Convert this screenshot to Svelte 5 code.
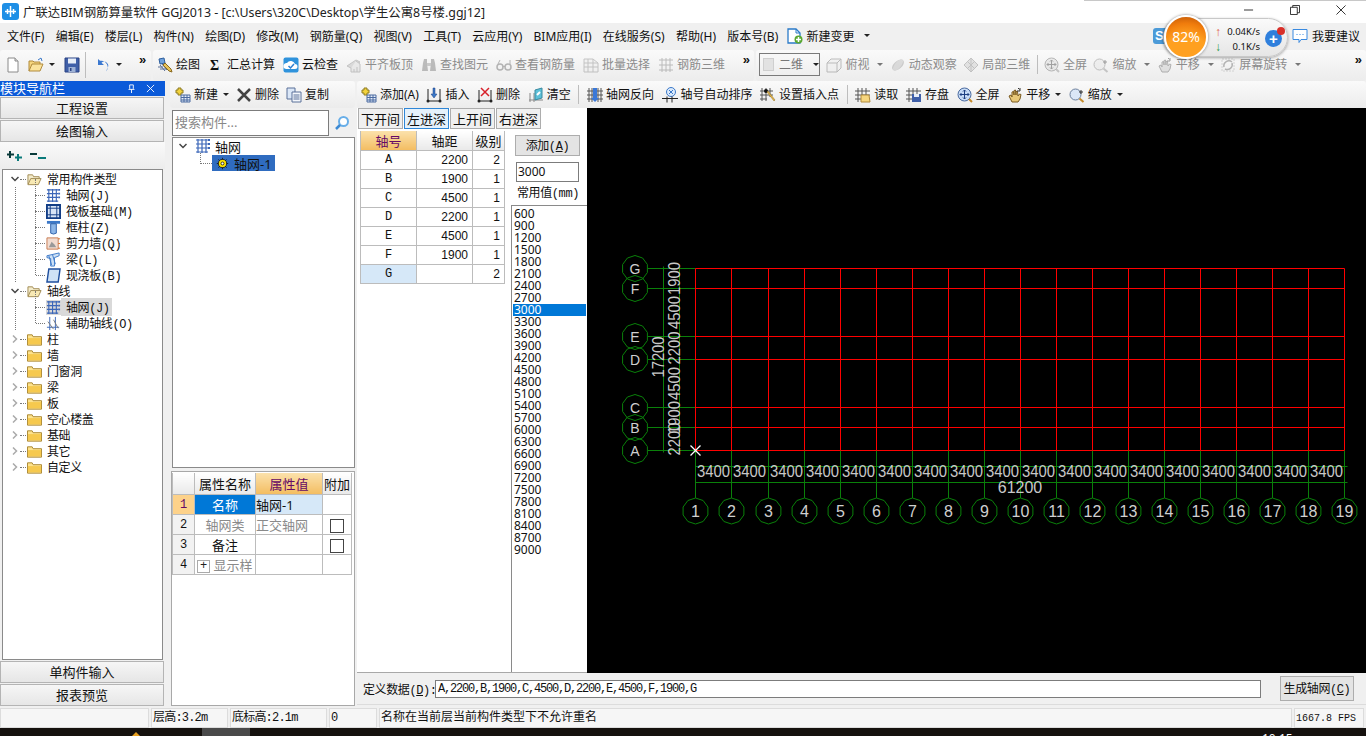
<script>
  const menus = ['文件(F)', '编辑(E)', '楼层(L)', '构件(N)', '绘图(D)', '修改(M)', '钢筋量(Q)', '视图(V)', '工具(T)', '云应用(Y)', 'BIM应用(I)', '在线服务(S)', '帮助(H)', '版本号(B)'];

  const drawTools = [
    { i: 'draw', t: '绘图' },
    { i: 'sigma', t: '汇总计算' },
    { i: 'cloud', t: '云检查' },
    { i: 'flush', t: '平齐板顶', off: true },
    { i: 'binoc', t: '查找图元', off: true },
    { i: 'glass', t: '查看钢筋量', off: true },
    { i: 'batch', t: '批量选择', off: true },
    { i: 'rebar', t: '钢筋三维', off: true }
  ];
  const viewTools = [
    { i: 'cube', t: '俯视', off: true, arrow: true },
    { i: 'orbit', t: '动态观察', off: true },
    { i: 'local', t: '局部三维', off: true }
  ];
  const viewTools2 = [
    { i: 'fit', t: '全屏', off: true },
    { i: 'zoom', t: '缩放', off: true, arrow: true },
    { i: 'hand', t: '平移', off: true, arrow: true },
    { i: 'rotate', t: '屏幕旋转', off: true, arrow: true }
  ];
  const gridTools = [
    { i: 'add', t: '添加(A)' },
    { i: 'insert', t: '插入' },
    { i: 'remove', t: '删除' },
    { i: 'clear', t: '清空' },
    { sep: true },
    { i: 'reverse', t: '轴网反向' },
    { i: 'sort', t: '轴号自动排序' },
    { i: 'point', t: '设置插入点' },
    { sep: true },
    { i: 'read', t: '读取' },
    { i: 'store', t: '存盘' },
    { i: 'fit', t: '全屏' },
    { i: 'hand', t: '平移', arrow: true },
    { i: 'zoom', t: '缩放', arrow: true }
  ];

  const tree = [
    { t: '常用构件类型', i: 'folderOpen', open: true },
    { t: '轴网(J)', i: 'grid', kid: true },
    { t: '筏板基础(M)', i: 'raft', kid: true },
    { t: '框柱(Z)', i: 'column', kid: true },
    { t: '剪力墙(Q)', i: 'wall', kid: true },
    { t: '梁(L)', i: 'beam', kid: true },
    { t: '现浇板(B)', i: 'slab', kid: true, last: true },
    { t: '轴线', i: 'folderOpen', open: true },
    { t: '轴网(J)', i: 'grid', kid: true, sel: true },
    { t: '辅助轴线(O)', i: 'aux', kid: true, last: true },
    { t: '柱', i: 'folder' },
    { t: '墙', i: 'folder' },
    { t: '门窗洞', i: 'folder' },
    { t: '梁', i: 'folder' },
    { t: '板', i: 'folder' },
    { t: '空心楼盖', i: 'folder' },
    { t: '基础', i: 'folder' },
    { t: '其它', i: 'folder' },
    { t: '自定义', i: 'folder' }
  ];

  const axisRows = [
    ['A', 2200, 2],
    ['B', 1900, 1],
    ['C', 4500, 1],
    ['D', 2200, 1],
    ['E', 4500, 1],
    ['F', 1900, 1],
    ['G', '', 2]
  ];
  const common = Array.from({ length: 29 }, (_, k) => 600 + k * 300);

  // canvas coordinates, relative to the top left of the black area
  const ox = 587;
  const oy = 108;
  const xs = Array.from({ length: 19 }, (_, k) => Math.round(695.4 + k * 36.05) + 0.5 - ox);
  const ys = [
    ['A', 450.5],
    ['B', 427.5],
    ['C', 407.5],
    ['D', 359.5],
    ['E', 336.5],
    ['F', 288.5],
    ['G', 268.5]
  ].map(([n, y]) => [n, y - oy]);
  const spans = [2200, 1900, 4500, 2200, 4500, 1900];
  const top = ys[6][1];
  const bottom = ys[0][1];
  const left = xs[0];
  const right = xs[18];

  // the axis bubbles are coarse circles with a corner on top
  function ring(cx, cy, r = 13, n = 10) {
    const pts = [];
    for (let k = 0; k < n; k++) {
      const a = (Math.PI * 2 * k) / n - Math.PI / 2;
      pts.push((cx + r * Math.cos(a)).toFixed(1) + ',' + (cy + r * Math.sin(a)).toFixed(1));
    }
    return pts.join(' ');
  }
</script>

{#snippet ic(n)}
  <svg class="ic" viewBox="0 0 16 16" aria-hidden="true">
    {#if n === 'new'}
      <path d="M3 1h7l3 3v11H3z" fill="#fff" stroke="#8a8a8a" /><path d="M10 1v3h3" fill="#ddd" stroke="#8a8a8a" />
    {:else if n === 'open'}
      <path d="M1 14V4h4l1 1h6v2" fill="#f6d67f" stroke="#b08a3c" /><path d="M1 14l3-7h11l-3 7z" fill="#fbe39c" stroke="#b08a3c" /><path d="M10 3l3-2 1 3" fill="none" stroke="#3a78c8" />
    {:else if n === 'save'}
      <path d="M1 1h14v14H1z" fill="#3f5fa8" stroke="#2b4383" /><path d="M4 1.500h8v5H4z" fill="#e8eef8" /><path d="M4.500 10h7v5h-7z" fill="#9eb2d6" /><path d="M6 11h1.500v3H6z" fill="#2b4383" />
    {:else if n === 'undo'}
      <path d="M3 2v6h6L6.500 5.800A4 4 0 0 1 12.500 11l-1.500 3.500A6.500 6.500 0 0 0 5 3.800z" fill="#3b78d0" />
    {:else if n === 'draw'}
      <path d="M2 2l5-1 1 5-5 1z" fill="#6fa1dc" stroke="#2e5f9e" /><path d="M3 8l5 6M5 7l5 6M1 10h5M3 12h6" stroke="#5a6f96" fill="none" /><path d="M8 6l6 6 1 3-3-1-6-6z" fill="#e8c35a" stroke="#8a6a1f" />
    {:else if n === 'cloud'}
      <rect x="0.500" y="0.500" width="15" height="15" rx="2" fill="#2f93dc" /><path d="M3 12a3 3 0 0 1 1-6 4.500 4.500 0 0 1 8 1 2.500 2.500 0 0 1 0 5z" fill="#fff" /><path d="M5.500 9l2 2 3.500-4" stroke="#2f7fd0" stroke-width="1.500" fill="none" />
    {:else if n === 'flush'}
      <path d="M1 9l9-6 4 2-9 6z" fill="#bbb" stroke="#888" /><path d="M5 11v4h9V7l-4-3" fill="#ddd" stroke="#888" /><path d="M8 12v3M11 10v5" stroke="#888" />
    {:else if n === 'binoc'}
      <path d="M3 2h3v4l1 8H1l1-8zM10 2h3l1 4 1 8H9l1-8z" fill="#777" /><path d="M6 6h4v3H6z" fill="#999" />
    {:else if n === 'glass'}
      <circle cx="4" cy="10" r="3" fill="none" stroke="#666" stroke-width="1.500" /><circle cx="12" cy="10" r="3" fill="none" stroke="#666" stroke-width="1.500" /><path d="M7 9.500h2M2 7l2-4M14 7v-4" stroke="#666" fill="none" />
    {:else if n === 'batch'}
      <path d="M1 2h9l5 4v9H1z" fill="#eee" stroke="#888" /><path d="M1 6h14M1 10h14M5 2v13M10 2v13" stroke="#888" fill="none" />
    {:else if n === 'rebar'}
      <path d="M1 3h14M1 8h14M1 13h14M4 1v14M8 1v14M12 1v14" stroke="#777" fill="none" />
    {:else if n === 'cube'}
      <path d="M1 6l4-4h10v9l-4 4H1z" fill="#eee" stroke="#777" /><path d="M1 6h10v9M11 6l4-4" fill="none" stroke="#777" />
    {:else if n === 'orbit'}
      <ellipse cx="8" cy="8" rx="7" ry="4" transform="rotate(-40 8 8)" fill="#999" /><ellipse cx="8" cy="8" rx="3" ry="7" transform="rotate(40 8 8)" fill="#bbb" />
    {:else if n === 'local'}
      <path d="M8 1l7 7-7 7-7-7z" fill="#ccc" stroke="#888" /><path d="M4.500 4.500l7 7M11.500 4.500l-7 7M8 1v14" stroke="#888" />
    {:else if n === 'fit'}
      <circle cx="7.500" cy="7.500" r="6.500" fill="#c8dcf6" stroke="#4a6aa0" /><path d="M7.500 3v9M3 7.500h9M7.500 3L6 4.500M7.500 3L9 4.500M7.500 12L6 10.500M7.500 12L9 10.500M3 7.500L4.500 6M3 7.500L4.500 9M12 7.500L10.500 6M12 7.500L10.500 9" stroke="#1e3f80" fill="none" /><path d="M12 12l3 3" stroke="#c48a2a" stroke-width="2" />
    {:else if n === 'zoom'}
      <circle cx="6.500" cy="7.500" r="5.500" fill="#dbe7f7" stroke="#6b7f9c" /><path d="M10.500 11.500l4 3.500" stroke="#c48a2a" stroke-width="2" /><path d="M12 3v4M10 5h4" stroke="#333" />
    {:else if n === 'hand'}
      <path d="M2 9l2-1 1 2V5l1.500-.500L7 8V3.500L8.500 3 9 8V4.500l1.500-.200L11 9l1.500-2 1.500.500-1 4.500-2 3H5z" fill="#e8c878" stroke="#7a5a20" /><path d="M11 1l1.500 1.500M13 1v3h-3" stroke="#333" fill="none" />
    {:else if n === 'rotate'}
      <path d="M2 2h12v12H2z" fill="none" stroke="#aaa" stroke-dasharray="2 1" /><path d="M4 10a5 5 0 0 1 8-5M12 6a5 5 0 0 1-7 6" fill="none" stroke="#666" stroke-width="1.500" />
    {:else if n === 'add'}
      <path d="M3 1h3v2h2v3H6v2H3V6H1V3h2z" fill="#f2d23c" stroke="#8d7a20" /><path d="M6 8h9v7H6z" fill="#e6eefa" stroke="#4a6aa0" /><path d="M6 10.500h9M6 13h9M9 8v7M12 8v7" stroke="#4a6aa0" />
    {:else if n === 'del'}
      <path d="M2 2l12 12M14 2L2 14" stroke="#444" stroke-width="2.500" />
    {:else if n === 'copy'}
      <path d="M1 1h8v11H1z" fill="#dbe7f7" stroke="#5a7199" /><path d="M6 5h9v10H6z" fill="#f4f7fc" stroke="#5a7199" /><path d="M7.500 8h6M7.500 10h6M7.500 12h6" stroke="#5a7199" />
    {:else if n === 'insert'}
      <path d="M2 2v12M14 2v12M1 14h14" stroke="#222" /><circle cx="2" cy="14" r="1.500" fill="#222" /><circle cx="14" cy="14" r="1.500" fill="#222" /><path d="M7 1h2v6h2l-3 4-3-4h2z" fill="#3a78c8" stroke="#1e3f80" stroke-width="0.500" />
    {:else if n === 'remove'}
      <path d="M2 3v11M14 3v11M1 14h14" stroke="#222" /><circle cx="2" cy="14" r="1.500" fill="#222" /><circle cx="14" cy="14" r="1.500" fill="#222" /><path d="M4 1l8 8M12 1L4 9" stroke="#d8202a" stroke-width="1.500" />
    {:else if n === 'clear'}
      <path d="M2 6v9M6 6v9M1 13h14" stroke="#888" /><path d="M7 3l7-2v10l-7 2z" fill="#5dc0d8" stroke="#3a8aa0" /><path d="M9 8l3-3" stroke="#fff" stroke-width="2" />
    {:else if n === 'reverse'}
      <path d="M2 1v14M5 1v14M11 1v14M14 1v14M0 4h16M0 8h16M0 12h16" stroke="#555" /><path d="M6 1h4v10h2l-4 4-4-4h2z" fill="#3a78d8" />
    {:else if n === 'sort'}
      <circle cx="9" cy="5" r="4.500" fill="#dbeafb" stroke="#3a78c8" /><path d="M7 3l4 4M11 3L7 7" stroke="#3a78c8" /><path d="M0 11.500h16M5 9.500v6M10 9.500v6" stroke="#222" />
    {:else if n === 'point'}
      <path d="M2 1v13M6 1v13M10 1v9M0 4h13M0 8h13M0 12h7" stroke="#555" /><circle cx="6" cy="4" r="2" fill="#111" /><path d="M7 5l7 9 1-1-7-9z" fill="#e8b84a" stroke="#8a6a1f" stroke-width="0.500" />
    {:else if n === 'read'}
      <path d="M3 1v14M7 1v14M11 1v8M0 4h15M0 8h15M0 12h6" stroke="#555" /><path d="M6 8h8l1 7H6z" fill="#f6d67f" stroke="#b08a3c" />
    {:else if n === 'store'}
      <path d="M3 1v14M7 1v8M11 1v8M0 4h15M0 8h15M0 12h6" stroke="#555" /><path d="M6 7h9v8H6z" fill="#3f5fa8" /><path d="M8 7h5v3H8z" fill="#e8eef8" />
    {:else if n === 'grid'}
      <path d="M1 2h12M1 6h12M1 10h12M1 14h12M3 1v14M7 1v14M11 1v14" stroke="#3b66b8" fill="none" stroke-width="1.200" /><path d="M13 1h2v2h-2zM13 5h2v2h-2zM13 9h2v2h-2z" fill="#3b66b8" />
    {:else if n === 'raft'}
      <path d="M1 1h14v14H1z" fill="#d8e4f6" stroke="#123d86" stroke-width="2" /><path d="M4.500 1v14M11.500 1v14M1 4.500h14M1 11.500h14" stroke="#123d86" />
    {:else if n === 'column'}
      <path d="M1 1h14v3H1z" fill="#3b78c8" /><path d="M5 4h6v10l-3 1-3-1z" fill="#8db7e8" stroke="#2a5da8" />
    {:else if n === 'wall'}
      <path d="M1 2h12v12H1z" fill="#f2dcd0" stroke="#c77b50" /><path d="M3 12l3-6 3 3 2 3z" fill="#999" /><path d="M13 3h2M13 8h2M13 13h2" stroke="#d8702a" />
    {:else if n === 'beam'}
      <path d="M1 4l13-3v3l-5 2v9H5V7L1 6z" fill="#cfe2f6" stroke="#3b78c8" /><path d="M3 4l3 10M7 3l3 10" stroke="#3b78c8" />
    {:else if n === 'slab'}
      <path d="M3 1h12l-2 14H1z" fill="#cfe2f6" stroke="#1f4f9e" stroke-width="1.500" />
    {:else if n === 'aux'}
      <path d="M1 12h13M4 1v14M10 1v14" stroke="#3b66b8" /><path d="M2 6l6 8M8 4l5 9" stroke="#777" />
    {:else if n === 'folder'}
      <path d="M.5 14V3h5l1 2h9v9z" fill="#fde28d" stroke="#a8842e" /><path d="M1 6.500h14V13H1z" fill="#f6c94e" />
    {:else if n === 'folderOpen'}
      <path d="M1 13V3h5l1 2h6v2" fill="#f4eccb" stroke="#a08a52" /><path d="M1 13.500L4 7h11l-3 6.500z" fill="#f8e9b4" stroke="#a08a52" />
    {:else if n === 'gear'}
      <circle cx="8" cy="8" r="5" fill="#ffe600" stroke="#111" /><circle cx="8" cy="8" r="1.800" fill="#fff" stroke="#111" /><path d="M8 1v2M8 13v2M1 8h2M13 8h2M3 3l1.500 1.500M13 3l-1.500 1.500M3 13l1.500-1.500M13 13l-1.500-1.500" stroke="#111" />
    {:else if n === 'change'}
      <path d="M1 1h8l4 4v10H1z" fill="#fff" stroke="#2a7ac8" stroke-width="1.300" /><path d="M9 1v4h4" fill="none" stroke="#2a7ac8" /><circle cx="11.500" cy="11.500" r="4" fill="#5aa832" /><path d="M11.500 9v5M9 11.500h5" stroke="#fff" stroke-width="1.500" />
    {:else if n === 'search'}
      <circle cx="9.500" cy="6.500" r="4.500" fill="#fff" stroke="#68aee8" stroke-width="2" /><path d="M6 10l-4 4" stroke="#3c8ad4" stroke-width="2.500" />
    {:else if n === 'chat'}
      <path d="M1 1.500h14v10H9l-2 3v-3H1z" fill="#fff" stroke="#3a8ae0" /><path d="M4.500 6.500h1M7.500 6.500h1M10.500 6.500h1" stroke="#3a8ae0" />
    {:else if n === 'sigma'}
      <text x="2" y="13" class="sigma">Σ</text>
    {/if}
  </svg>
{/snippet}

{#snippet tool(it)}
  {#if it.sep}
    <span class="sep"></span>
  {:else}
    <span class="tool" class:off={it.off}>
      {@render ic(it.i)}<span class="lift">{it.t}</span>{#if it.arrow}<span class="arrow"></span>{/if}
    </span>
  {/if}
{/snippet}

<div class="app">
  <header class="title">
    <svg class="logo" viewBox="0 0 17 17" aria-hidden="true">
      <rect width="17" height="17" rx="3" fill="#1e8fe6" />
      <path d="M8.500 3v11M3 8.500h11M5.500 6v5M11.500 6v5" stroke="#fff" stroke-width="1.500" fill="none" />
    </svg>
    <span class="title-text">广联达BIM钢筋算量软件 GGJ2013 - [c:\Users\320C\Desktop\学生公寓8号楼.ggj12]</span>
    <i class="shadow"></i>
    <div class="win">
      <svg viewBox="0 0 11 11"><path d="M0 5.500h10" stroke="#222" /></svg>
      <svg viewBox="0 0 11 11"><path d="M.5 2.500h7.500v8H.5zM3 2.500V.5h7.500v8H8" fill="none" stroke="#222" /></svg>
      <svg viewBox="0 0 11 11"><path d="M.5.5l10 10M10.500.5l-10 10" stroke="#222" /></svg>
    </div>
  </header>

  <nav class="menu">
    {#each menus as m}<span>{m}</span>{/each}
    <span class="change">{@render ic('change')}<b>新建变更</b><span class="arrow"></span></span>
    <span class="suggest">{@render ic('chat')}<b>我要建议</b></span>
  </nav>

  <div class="bar top-bar">
    <div class="group first">
      {@render ic('new')}
      <span class="gap7"></span>
      {@render ic('open')}<span class="arrow"></span>
      <span class="gap9"></span>
      {@render ic('save')}
      <span class="sep tall"></span>
      {@render ic('undo')}<span class="arrow"></span>
      <span class="more">»</span>
    </div>
    <div class="group second">
      {#each drawTools as it}{@render tool(it)}{/each}
      <span class="more">»</span>
    </div>
    <div class="group last">
      <span class="combo"><i></i><span class="lift">二维</span><span class="arrow"></span></span>
      {#each viewTools as it}{@render tool(it)}{/each}
      <span class="sep"></span>
      {#each viewTools2 as it}{@render tool(it)}{/each}
      <span class="more end">»</span>
    </div>
  </div>

  <main class="body">
    <aside class="nav">
      <div class="nav-head">
        <span>模块导航栏</span>
        <svg viewBox="0 0 10 10"><path d="M3 1h4v4l1 1H2l1-1zM5 6v4" fill="none" stroke="#fff" /></svg>
        <svg viewBox="0 0 10 10"><path d="M1 1l8 8M9 1l-8 8" stroke="#fff" /></svg>
      </div>
      <button class="nav-btn">工程设置</button>
      <button class="nav-btn">绘图输入</button>
      <div class="expand">
        <svg viewBox="0 0 16 10"><path d="M3 0v7M0 3.500h7" stroke="#0a3a3a" stroke-width="2" /><path d="M11 3v7M8 6.500h7" stroke="#0a7a7a" stroke-width="2" /></svg>
        <svg viewBox="0 0 16 10"><path d="M0 3h7" stroke="#0a3a3a" stroke-width="2" /><path d="M8 7h8" stroke="#0a7a7a" stroke-width="2" /></svg>
      </div>
      <div class="tree">
        {#each tree as n}
          <div class="node" class:kid={n.kid} class:last={n.last} class:sel={n.sel} class:open={n.open}>
            {#if !n.kid}
              <svg class="chev" viewBox="0 0 8 8">
                {#if n.open}<path d="M.5 2l3.500 3.500L7.500 2" fill="none" stroke="#444" stroke-width="1.500" />{:else}<path d="M2 .5L5.500 4 2 7.500" fill="none" stroke="#aaa" stroke-width="1.500" />{/if}
              </svg>
            {/if}
            {@render ic(n.i)}<span class="node-text">{n.t}</span>
          </div>
        {/each}
      </div>
      <button class="nav-btn">单构件输入</button>
      <button class="nav-btn">报表预览</button>
    </aside>

    <section class="mid">
      <div class="bar small">
        <span class="tool">{@render ic('add')}<span class="lift">新建</span><span class="arrow"></span></span>
        <span class="tool">{@render ic('del')}<span class="lift">删除</span></span>
        <span class="tool">{@render ic('copy')}<span class="lift">复制</span></span>
      </div>
      <div class="search">
        <span class="search-box">搜索构件...</span>
        {@render ic('search')}
      </div>
      <div class="comp-tree">
        <div class="comp-row">
          <svg class="chev" viewBox="0 0 8 8"><path d="M.5 2l3.500 3.500L7.500 2" fill="none" stroke="#444" stroke-width="1.500" /></svg>
          {@render ic('grid')}<span>轴网</span>
        </div>
        <div class="comp-row child">{@render ic('gear')}<span>轴网-1</span></div>
      </div>
      <div class="props">
        <table>
          <thead>
            <tr><th></th><th>属性名称</th><th class="hot">属性值</th><th>附加</th></tr>
          </thead>
          <tbody>
            <tr><td class="no cur">1</td><td class="mid-c picked">名称</td><td class="val">轴网-1</td><td></td></tr>
            <tr><td class="no">2</td><td class="mid-c grey">轴网类</td><td class="grey">正交轴网</td><td class="mid-c"><i class="check"></i></td></tr>
            <tr><td class="no">3</td><td class="mid-c">备注</td><td></td><td class="mid-c"><i class="check"></i></td></tr>
            <tr><td class="no">4</td><td class="grey"><i class="plus">+</i> 显示样</td><td></td><td></td></tr>
          </tbody>
        </table>
      </div>
    </section>

    <section class="work">
      <div class="bar small wide">
        {#each gridTools as it}{@render tool(it)}{/each}
      </div>
      <div class="work-main">
        <div class="editor">
          <div class="tabs">
            <button>下开间</button>
            <button class="active">左进深</button>
            <button>上开间</button>
            <button>右进深</button>
          </div>
          <div class="editor-body">
            <div class="axis-pane">
              <table class="axis">
                <thead>
                  <tr><th class="hot">轴号</th><th>轴距</th><th>级别</th></tr>
                </thead>
                <tbody>
                  {#each axisRows as r, k}
                    <tr>
                      <td class="name" class:val={k === 6}>{r[0]}</td>
                      <td class="num">{r[1]}</td>
                      <td class="num">{r[2]}</td>
                    </tr>
                  {/each}
                </tbody>
              </table>
            </div>
            <div class="side">
              <button class="add-btn">添加(<u>A</u>)</button>
              <div class="value-box">3000</div>
              <div class="common-title">常用值(mm)</div>
              <div class="list">
                {#each common as v}<div class:on={v === 3000}>{v}</div>{/each}
              </div>
            </div>
          </div>
        </div>

        <svg class="canvas" viewBox="0 0 779 565" aria-label="轴网预览">
          <!-- grid -->
          {#each ys as [n, y]}
            <line x1="61" x2={left} y1={y} y2={y} class="green" />
            <line x1={left} x2={right} y1={y} y2={y} class="red" />
            <polygon points={ring(48, y)} class="bubble" />
            <text x="48" y={y + 5.500} class="label">{n}</text>
          {/each}
          {#each xs as x, k}
            <line x1={x} x2={x} y1={bottom} y2="390" class="green" />
            <line x1={x} x2={x} y1={top} y2={bottom} class="red" />
            <polygon points={ring(x, 403)} class="bubble" />
            <text x={x} y="409" class="label big">{k + 1}</text>
          {/each}

          <!-- dimensions -->
          <line x1={left} x2={right + 3} y1="358.500" y2="358.500" class="green" />
          <line x1={left} x2={right + 3} y1="374.500" y2="374.500" class="green" />
          <line x1="76.500" x2="76.500" y1={top - 2} y2={bottom + 2} class="green" />
          <line x1="92.500" x2="92.500" y1={top} y2={bottom} class="green" />
          {#each xs.slice(0, 18) as x}
            <text x={x + 18} y="369" class="dim" textLength="33" lengthAdjust="spacingAndGlyphs">3400</text>
          {/each}
          <text x={(left + right) / 2} y="385" class="dim">61200</text>
          {#each spans as s, k}
            <text
              transform="translate(93 {(ys[k][1] + ys[k + 1][1]) / 2}) rotate(-90)"
              class="dim"
              textLength="33"
              lengthAdjust="spacingAndGlyphs">{s}</text>
          {/each}
          <text transform="translate(77 249) rotate(-90)" class="dim" textLength="41" lengthAdjust="spacingAndGlyphs">17200</text>

          <!-- cursor mark on the origin -->
          <path d="M{left - 5} {bottom - 5}l10 10M{left + 5} {bottom - 5}l-10 10" stroke="#fff" stroke-width="1.300" fill="none" />
        </svg>
      </div>
      <div class="define">
        <label for="def">定义数据(<u>D</u>):</label>
        <input id="def" value="A,2200,B,1900,C,4500,D,2200,E,4500,F,1900,G" readonly />
        <button>生成轴网(<u>C</u>)</button>
      </div>
    </section>
  </main>

  <footer class="status">
    <span class="cell c1"></span>
    <span class="cell c2">层高:3.2m</span>
    <span class="cell c3">底标高:2.1m</span>
    <span class="cell c4">0</span>
    <span class="cell c5">名称在当前层当前构件类型下不允许重名</span>
    <span class="cell c6">1667.8 FPS</span>
  </footer>
  <div class="taskbar">
    <i class="flag"></i><i class="task"></i><span class="clock">10:15</span>
  </div>

  <!-- desktop widget floating over the app -->
  <div class="skype">S</div>
  <div class="speed">
    <div class="ball">82%</div>
    <div class="rates">
      <span class="up">↑</span><span>0.04K/s</span>
      <span class="down">↓</span><span>0.1K/s</span>
    </div>
    <div class="boost">+<i></i></div>
  </div>
</div>

<style>
  :global(body) {
    margin: 0;
    background: #000;
  }

  .app {
    position: relative;
    width: 1366px;
    height: 736px;
    overflow: hidden;
    display: flex;
    flex-direction: column;
    background: #f0f0f0;
    color: #111;
    font: 12px 'Noto Sans', 'Noto Sans CJK SC', sans-serif;
  }

  .ic {
    width: 16px;
    height: 16px;
    flex: none;
    display: block;
  }

  .sigma {
    font: bold 14px 'Liberation Serif', serif;
    fill: #111;
  }

  .lift {
    padding-bottom: 2px;
  }

  button {
    font: inherit;
    color: inherit;
    padding: 0 0 2px;
  }

  /* title + menu */
  .title {
    height: 23px;
    flex: none;
    background: #fff;
    display: flex;
    align-items: center;
    padding-left: 2px;
    position: relative;
  }

  .logo {
    width: 17px;
    height: 17px;
    margin-right: 4px;
  }

  .title-text {
    font-size: 12.400px;
    color: #222;
    white-space: nowrap;
  }

  .shadow {
    position: absolute;
    left: 1084px;
    right: 0;
    top: 0;
    height: 1px;
    background: #c8c8c8;
  }

  .win {
    position: absolute;
    top: 5px;
    right: 20px;
    display: flex;
    gap: 36px;
  }

  .win svg {
    width: 10px;
    height: 10px;
  }

  .menu {
    height: 27px;
    flex: none;
    box-sizing: border-box;
    padding: 0 0 2px 7px;
    display: flex;
    align-items: center;
    gap: 11.250px;
    background: #f0f0f0;
    white-space: nowrap;
  }

  .menu b {
    font-weight: 400;
  }

  .change {
    display: flex;
    align-items: center;
    gap: 4px;
    margin-left: -3px;
  }

  .suggest {
    position: absolute;
    left: 1292px;
    display: flex;
    align-items: center;
    gap: 4px;
  }

  .arrow {
    display: inline-block;
    width: 0;
    height: 0;
    margin-left: 5px;
    border: 3px solid transparent;
    border-top: 3px solid #222;
    border-bottom: 0;
    vertical-align: middle;
    flex: none;
  }

  /* toolbars */
  .bar {
    display: flex;
    align-items: center;
    white-space: nowrap;
  }

  .top-bar {
    height: 31px;
    flex: none;
    gap: 2px;
  }

  .group {
    height: 100%;
    display: flex;
    align-items: center;
    gap: 8px;
    padding: 0 3px 2px;
    background: linear-gradient(#fafafa, #ececec);
    border-radius: 3px;
    position: relative;
    box-sizing: border-box;
  }

  .group.first {
    width: 151px;
    flex: none;
    padding-left: 5px;
    gap: 0;
  }

  .group.second {
    width: 601px;
    flex: none;
    padding-left: 4px;
  }

  .group.last {
    flex: 1;
    gap: 6.400px;
  }

  .gap7 {
    width: 7px;
  }

  .gap9 {
    width: 9px;
  }

  .more {
    font: 700 13px 'Liberation Sans', sans-serif;
    position: absolute;
    top: 2px;
  }

  .first .more {
    left: 139px;
  }

  .second .more {
    right: 4px;
  }

  .end {
    right: 4px;
  }

  .tool {
    display: flex;
    align-items: center;
    gap: 3px;
  }

  .tool.off {
    color: #8c8c8c;
  }

  .tool.off .ic {
    opacity: 0.45;
    filter: grayscale(1);
  }

  .tool.off .arrow {
    border-top-color: #777;
  }

  .sep {
    width: 1px;
    height: 19px;
    background: #bdbdbd;
    flex: none;
  }

  .sep.tall {
    height: 26px;
    margin: 0 9px 0 5px;
  }

  .combo {
    width: 61px;
    height: 23px;
    box-sizing: border-box;
    border: 1px solid #7a7a7a;
    display: flex;
    align-items: center;
    gap: 5px;
    padding-left: 3px;
    color: #777;
    flex: none;
  }

  .combo i {
    width: 14px;
    height: 11px;
    background: #e2e2e2;
    border: 1px solid #cfcfcf;
  }

  /* body */
  .body {
    height: 626px;
    flex: none;
    display: grid;
    grid-template-columns: 165px 192px 1fr;
  }

  .nav {
    display: flex;
    flex-direction: column;
    min-height: 0;
    padding-bottom: 1px;
  }

  .nav-head {
    height: 15px;
    flex: none;
    background: #0b5ad9;
    color: #fff;
    display: flex;
    align-items: center;
    font-size: 13px;
    line-height: 15px;
  }

  .nav-head span {
    flex: 1;
  }

  .nav-head svg {
    width: 9px;
    height: 9px;
    margin-right: 10px;
  }

  .nav-btn {
    height: 22px;
    flex: none;
    margin: 1px 0 0;
    width: 164px;
    border: 1px solid #b4b4b4;
    background: linear-gradient(#f6f6f6, #e6e6e6);
    font-size: 13px;
  }

  .expand {
    height: 27px;
    flex: none;
    display: flex;
    align-items: center;
    gap: 7px;
    padding-left: 7px;
    background: linear-gradient(#fafafa, #ececec);
  }

  .expand svg {
    width: 16px;
    height: 10px;
  }

  .tree {
    flex: 1;
    min-height: 0;
    margin: 0 2px 0 2px;
    padding-top: 1px;
    background: #fff;
    border: 1px solid #8a8a8a;
  }

  .node {
    position: relative;
    height: 16px;
    display: flex;
    align-items: center;
    padding-left: 24px;
    font: 12px 'Liberation Mono', 'Noto Sans CJK SC', monospace;
    letter-spacing: -0.400px;
    white-space: nowrap;
  }

  .node .ic {
    width: 15px;
    height: 15px;
  }

  .node-text {
    padding: 0 2px 0 5px;
  }

  .chev {
    position: absolute;
    left: 8px;
    top: 4px;
    width: 8px;
    height: 8px;
  }

  .node:not(.kid)::after {
    content: '';
    position: absolute;
    left: 17px;
    top: 8px;
    width: 6px;
    border-top: 1px dotted #777;
  }

  .node.kid {
    padding-left: 43px;
    background: repeating-linear-gradient(#777 0 1px, transparent 1px 2px) 12px 0 / 1px 100% no-repeat;
  }

  .node.kid::before {
    content: '';
    position: absolute;
    left: 32px;
    top: -8px;
    height: 16px;
    border-left: 1px dotted #777;
  }

  .node.kid::after {
    content: '';
    position: absolute;
    left: 33px;
    top: 8px;
    width: 9px;
    border-top: 1px dotted #777;
  }

  .node.sel .node-text,
  .node.sel .ic {
    background: #d9d9d9;
  }

  .mid {
    padding: 0 2px 0 5px;
    display: flex;
    flex-direction: column;
    min-height: 0;
  }

  .small {
    height: 27px;
    flex: none;
    gap: 7px;
    padding-left: 5px;
    background: linear-gradient(#fafafa, #ececec);
    border-radius: 3px;
  }

  .small .arrow {
    margin-left: 2px;
  }

  .small.wide {
    padding-left: 4px;
    gap: 7.600px;
  }

  .search {
    height: 29px;
    flex: none;
    display: flex;
    align-items: center;
    gap: 5px;
    padding-left: 2px;
  }

  .search-box {
    width: 153px;
    height: 24px;
    line-height: 22px;
    background: #fff;
    border: 1px solid #7c7c7c;
    color: #888;
    font-size: 13px;
    padding-left: 2px;
  }

  .comp-tree {
    height: 331px;
    flex: none;
    margin-left: 2px;
    box-sizing: border-box;
    background: #fff;
    border: 1px solid #8a8a8a;
    font-size: 13px;
  }

  .comp-row {
    position: relative;
    height: 16px;
    display: flex;
    align-items: center;
    gap: 4px;
    padding-left: 22px;
  }

  .comp-row .chev {
    left: 6px;
  }

  .comp-row.child {
    margin: 1px 0 0 39px;
    padding: 0 0 0 4px;
    width: 63px;
    box-sizing: border-box;
    background: #2f6cc0;
    gap: 5px;
  }

  .comp-row.child::before {
    content: '';
    position: absolute;
    left: -12px;
    top: -2px;
    width: 11px;
    height: 10px;
    border: 1px dotted #777;
    border-width: 0 0 1px 1px;
  }

  .comp-row.child .ic {
    width: 13px;
    height: 13px;
  }

  .props {
    flex: 1;
    min-height: 0;
    margin: 3px 0 1px 1px;
    box-sizing: border-box;
    background: #fff;
    border: 1px solid #a8a8a8;
    padding: 1px 0 0;
  }

  table {
    border-collapse: collapse;
    table-layout: fixed;
    font-size: 13px;
  }

  th,
  td {
    border: 1px solid #bcbcbc;
    font-weight: 400;
    padding: 0;
    height: 18px;
    white-space: nowrap;
    overflow: hidden;
  }

  .props table {
    width: 180px;
  }

  .props th {
    height: 21px;
    background: linear-gradient(#fff, #e9e9e9);
    border-top: 0;
  }

  .props th:nth-child(1) {
    width: 21px;
  }

  .props th:nth-child(2) {
    width: 60px;
  }

  .props th:nth-child(3) {
    width: 66px;
  }

  th.hot {
    background: linear-gradient(#fbe1ab, #f3bd62) !important;
    color: #660a66;
  }

  .no {
    text-align: center;
    background: #f2f2f2;
    font: 12px 'Liberation Mono', monospace;
  }

  .no.cur {
    background: #fdd28a;
    color: #660a66;
  }

  .mid-c {
    text-align: center;
  }

  .picked {
    background: #0078d7;
    color: #fff;
  }

  .val {
    background: #d6e8f8;
  }

  .grey {
    color: #8a8a8a;
  }

  .check {
    display: inline-block;
    width: 12px;
    height: 12px;
    border: 1px solid #444;
    vertical-align: middle;
  }

  .plus {
    display: inline-block;
    width: 11px;
    height: 11px;
    border: 1px solid #aaa;
    color: #222;
    font: 12px/11px 'Liberation Mono', monospace;
    text-align: center;
    margin-left: 2px;
    vertical-align: middle;
  }

  /* axis editor */
  .work {
    display: flex;
    flex-direction: column;
    min-width: 0;
    min-height: 0;
  }

  .work-main {
    height: 565px;
    flex: none;
    display: flex;
  }

  .editor {
    width: 230px;
    flex: none;
    background: #fff;
    display: flex;
    flex-direction: column;
    box-sizing: border-box;
    border-bottom: 1px solid #a8a8a8;
  }

  .tabs {
    height: 21px;
    flex: none;
    display: flex;
    gap: 1px;
    padding-left: 1px;
  }

  .tabs button {
    width: 45px;
    border: 1px solid #adadad;
    background: #f0f0f0;
    font-size: 13px;
  }

  .tabs button.active {
    position: relative;
    border-color: #2f86d6;
    background: #e5f1fb;
  }

  .editor-body {
    flex: 1;
    min-height: 0;
    display: flex;
  }

  .axis-pane {
    width: 154px;
    flex: none;
    box-sizing: border-box;
    padding: 2px 0 0 3px;
  }

  .axis {
    width: 145px;
  }

  .axis th {
    height: 18px;
    background: linear-gradient(#fff, #e9e9e9);
    border-top: 0;
  }

  .axis th:nth-child(1) {
    width: 55px;
  }

  .axis th:nth-child(2) {
    width: 55px;
  }

  .name {
    text-align: center;
    font: 12px 'Liberation Mono', monospace;
  }

  .num {
    text-align: right;
    padding-right: 4px;
    font: 12px 'Liberation Sans', sans-serif;
  }

  .side {
    flex: 1;
    min-width: 0;
    display: flex;
    flex-direction: column;
    position: relative;
  }

  .add-btn {
    width: 65px;
    height: 21px;
    margin: 6px 0 0 4px;
    flex: none;
    border: 1px solid #adadad;
    background: #e4e4e4;
    font: 12px 'Liberation Mono', 'Noto Sans CJK SC', monospace;
    letter-spacing: -0.400px;
  }

  .value-box {
    width: 60px;
    height: 18px;
    margin: 6px 0 0 5px;
    flex: none;
    border: 1px solid #7c7c7c;
    padding-left: 1px;
    font: 12px/18px 'Noto Sans', sans-serif;
  }

  .common-title {
    height: 23px;
    flex: none;
    margin-left: 6px;
    font: 12px/24px 'Liberation Mono', 'Noto Sans CJK SC', monospace;
    letter-spacing: -0.400px;
  }

  .list {
    flex: 1;
    min-height: 0;
    border: 1px solid #8a8a8a;
    border-width: 1px 0 0 1px;
    padding: 2px 0 0 1px;
    font: 12px/12px 'Noto Sans', sans-serif;
  }

  .list div {
    padding-left: 1px;
    height: 12px;
  }

  .list div.on {
    background: #0078d7;
    color: #fff;
    margin-right: 1px;
  }

  .canvas {
    flex: 1;
    min-width: 0;
    display: block;
    background: #000;
  }

  .red {
    stroke: #ff0000;
    stroke-width: 1;
  }

  .green {
    stroke: #0a800a;
    stroke-width: 1;
  }

  .bubble {
    fill: none;
    stroke: #0a800a;
  }

  .label {
    fill: #cfcfcf;
    font: 14px 'Liberation Sans', sans-serif;
    text-anchor: middle;
  }

  .label.big {
    font-size: 16px;
  }

  .dim {
    fill: #c8c8c8;
    font: 16px 'Liberation Sans', sans-serif;
    text-anchor: middle;
  }

  .define {
    height: 32px;
    flex: none;
    display: flex;
    align-items: center;
    padding-left: 6px;
    font: 12px 'Liberation Mono', 'Noto Sans CJK SC', monospace;
    box-sizing: border-box;
    border-bottom: 1px solid #dcdcdc;
  }

  .define label {
    width: 72px;
    flex: none;
    letter-spacing: -0.400px;
    white-space: nowrap;
  }

  .define input {
    width: 820px;
    height: 16px;
    flex: none;
    border: 1px solid #7c7c7c;
    padding: 0 2px;
    margin: 0;
    font: 12px 'Liberation Mono', monospace;
    letter-spacing: -1.200px;
    color: #111;
    background: #fff;
  }

  .define button {
    width: 74px;
    height: 25px;
    margin-left: 19px;
    flex: none;
    border: 1px solid #adadad;
    background: #e4e4e4;
    font: 12px 'Liberation Mono', 'Noto Sans CJK SC', monospace;
    letter-spacing: -0.400px;
    white-space: nowrap;
  }

  /* status */
  .status {
    height: 21px;
    flex: none;
    display: flex;
    gap: 2px;
    padding-top: 1px;
    box-sizing: border-box;
    font: 12px 'Liberation Mono', 'Noto Sans CJK SC', monospace;
  }

  .cell {
    box-sizing: border-box;
    border: 1px solid #dcdcdc;
    background: #f6f6f6;
    line-height: 19px;
    padding-left: 1px;
    white-space: nowrap;
    flex: none;
  }

  .c1 { width: 149px; }
  .c2 { width: 77px; letter-spacing: -0.800px; }
  .c3 { width: 97px; letter-spacing: -0.800px; }
  .c4 { width: 48px; }
  .c5 { width: 913px; }
  .c6 { width: 70px; font-size: 10px; }

  .taskbar {
    flex: 1;
    min-height: 0;
    position: relative;
    overflow: hidden;
    background: #15110e;
  }

  .flag {
    position: absolute;
    left: 132px;
    top: 0;
    border: 4px solid transparent;
    border-bottom: 4px solid #e8a020;
  }

  .task {
    position: absolute;
    left: 202px;
    width: 48px;
    height: 8px;
    background: #4a4a4a;
  }

  .clock {
    position: absolute;
    left: 1262px;
    top: 4px;
    color: #fff;
    font-size: 12px;
    line-height: 14px;
  }

  /* widget */
  .skype {
    position: absolute;
    left: 1153px;
    top: 28px;
    width: 16px;
    height: 16px;
    background: #4b9ad8;
    border-radius: 3px;
    color: #fff;
    font: 700 13px/16px 'Liberation Sans', sans-serif;
    padding-left: 2px;
  }

  .speed {
    position: absolute;
    left: 1163px;
    top: 18px;
    width: 125px;
    height: 39px;
    box-sizing: border-box;
    border: 1px solid #c8c8c8;
    border-radius: 20px;
    background: linear-gradient(#fafafa, #e6e6e6);
    box-shadow: 0 1px 3px rgba(0, 0, 0, 0.35);
  }

  .ball {
    position: absolute;
    left: 0;
    top: -4px;
    width: 40px;
    height: 40px;
    border-radius: 50%;
    border: 2px solid #fff;
    box-shadow: 0 0 3px rgba(0, 0, 0, 0.5);
    background: radial-gradient(circle at 50% 100%, #ffa020 50%, #f07c0c 75%, #b85208 100%);
    color: #fff;
    font-size: 14px;
    line-height: 40px;
    text-align: center;
  }

  .rates {
    position: absolute;
    left: 51px;
    top: 6px;
    display: grid;
    grid-template-columns: 10px 35px;
    line-height: 14.500px;
    font-size: 9.500px;
    text-align: right;
  }

  .up,
  .down {
    font: 700 12px/14px 'Liberation Sans', sans-serif;
    text-align: left;
  }

  .up {
    color: #e0604a;
  }

  .down {
    color: #2e9a4a;
  }

  .boost {
    position: absolute;
    left: 101px;
    top: 11px;
    width: 17px;
    height: 17px;
    border-radius: 50%;
    background: #2f7fdc;
    color: #fff;
    font: 700 15px/17px 'Liberation Sans', sans-serif;
    text-align: center;
  }

  .boost i {
    position: absolute;
    right: -3px;
    top: -3px;
    width: 8px;
    height: 8px;
    border-radius: 50%;
    background: #d8302a;
  }
</style>
